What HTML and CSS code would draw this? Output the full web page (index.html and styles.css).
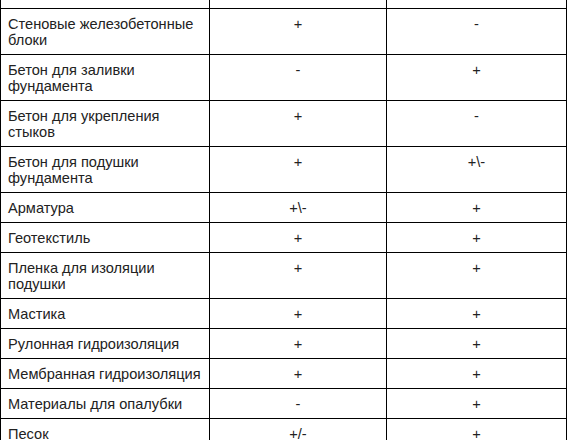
FILE: index.html
```html
<!DOCTYPE html>
<html lang="ru">
<head>
<meta charset="utf-8">
<title>Материалы</title>
<link rel="stylesheet" href="styles.css">
</head>
<body>
<table class="materials">
  <colgroup>
    <col class="c-name">
    <col class="c-a">
    <col class="c-b">
  </colgroup>
  <tbody>
    <tr class="cut"><td></td><td></td><td></td></tr>
    <tr><td>Стеновые железобетонные блоки</td><td class="mark">+</td><td class="mark">-</td></tr>
    <tr><td>Бетон для заливки фундамента</td><td class="mark">-</td><td class="mark">+</td></tr>
    <tr><td>Бетон для укрепления стыков</td><td class="mark">+</td><td class="mark">-</td></tr>
    <tr><td>Бетон для подушки фундамента</td><td class="mark">+</td><td class="mark">+\-</td></tr>
    <tr><td>Арматура</td><td class="mark">+\-</td><td class="mark">+</td></tr>
    <tr><td>Геотекстиль</td><td class="mark">+</td><td class="mark">+</td></tr>
    <tr><td>Пленка для изоляции подушки</td><td class="mark">+</td><td class="mark">+</td></tr>
    <tr><td>Мастика</td><td class="mark">+</td><td class="mark">+</td></tr>
    <tr><td>Рулонная гидроизоляция</td><td class="mark">+</td><td class="mark">+</td></tr>
    <tr><td>Мембранная гидроизоляция</td><td class="mark">+</td><td class="mark">+</td></tr>
    <tr><td>Материалы для опалубки</td><td class="mark">-</td><td class="mark">+</td></tr>
    <tr><td>Песок</td><td class="mark">+/-</td><td class="mark">+</td></tr>
  </tbody>
</table>
</body>
</html>
```
FILE: styles.css
```css
html, body {
  margin: 0;
  padding: 0;
  background: #ffffff;
}
body {
  font-family: "Liberation Sans", Arial, sans-serif;
  font-size: 14.6px;
  line-height: 16px;
  color: #222222;
  overflow: hidden;
}
.materials {
  table-layout: fixed;
  width: 567px;
  border-collapse: separate;
  border-spacing: 0;
  border-left: 1px solid #000;
}
.c-name { width: 209px; }
.c-a { width: 177px; }
.c-b { width: 180px; }
.materials td {
  box-sizing: border-box;
  border-right: 1px solid #000;
  border-bottom: 1px solid #000;
  padding: 7px 6px 6px 7px;
  vertical-align: top;
  text-align: left;
}
.materials td.mark {
  text-align: center;
  padding-left: 4px;
  padding-right: 4px;
}
.materials tr.cut td {
  height: 9px;
  padding: 0;
}
```
